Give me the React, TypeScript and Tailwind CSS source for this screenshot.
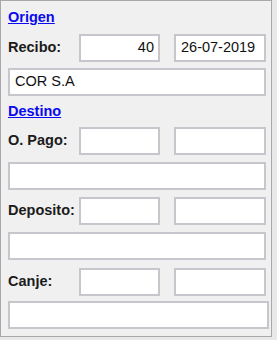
const font = { fontFamily: '"Liberation Sans", Arial, sans-serif' };

function Box({ value = "", className = "", align = "left" }: { value?: string; className?: string; align?: "left" | "right" }) {
  return (
    <div
      className={`h-[28px] border-2 border-[#c6c6cc] bg-white flex items-center text-[14.5px] text-[#111] px-[4px] ${
        align === "right" ? "justify-end" : "justify-start"
      } ${className}`}
    >
      {value}
    </div>
  );
}

function Row({ label, a = "", b = "", className = "" }: { label: string; a?: string; b?: string; className?: string }) {
  return (
    <div className={`flex items-center ${className}`}>
      <span className="w-[71px] shrink-0 whitespace-nowrap text-[14.5px] font-bold text-[#1b1b1b]">{label}</span>
      <Box value={a} align="right" className="w-[81px]" />
      <Box value={b} className="w-[92px] ml-[14px] pl-[5px]" />
    </div>
  );
}

function Section({ title, className = "" }: { title: string; className?: string }) {
  return (
    <a href="#" className={`block h-[18px] leading-[18px] text-[14.5px] font-bold text-[#0a0af0] underline ${className}`}>
      {title}
    </a>
  );
}

export default function App() {
  return (
    <div className="w-[277px] h-[340px] bg-[#e9e9e9]" style={font}>
      <div className="w-[272px] h-[337px] bg-[#f0f0f0] border border-[#a8a8a8] pl-[7px] pt-[7px]">
        <Section title="Origen" />
        <Row label="Recibo:" a="40" b="26-07-2019" className="mt-[8px]" />
        <Box value="COR S.A" className="w-[258px] mt-[6px] pl-[5px]" />
        <Section title="Destino" className="mt-[6px]" />
        <Row label="O. Pago:" className="mt-[7px]" />
        <Box className="w-[258px] mt-[7px]" />
        <Row label="Deposito:" className="mt-[7px]" />
        <Box className="w-[258px] mt-[7px]" />
        <Row label="Canje:" className="mt-[8px]" />
        <Box className="w-[261px] mt-[5px]" />
      </div>
    </div>
  );
}
